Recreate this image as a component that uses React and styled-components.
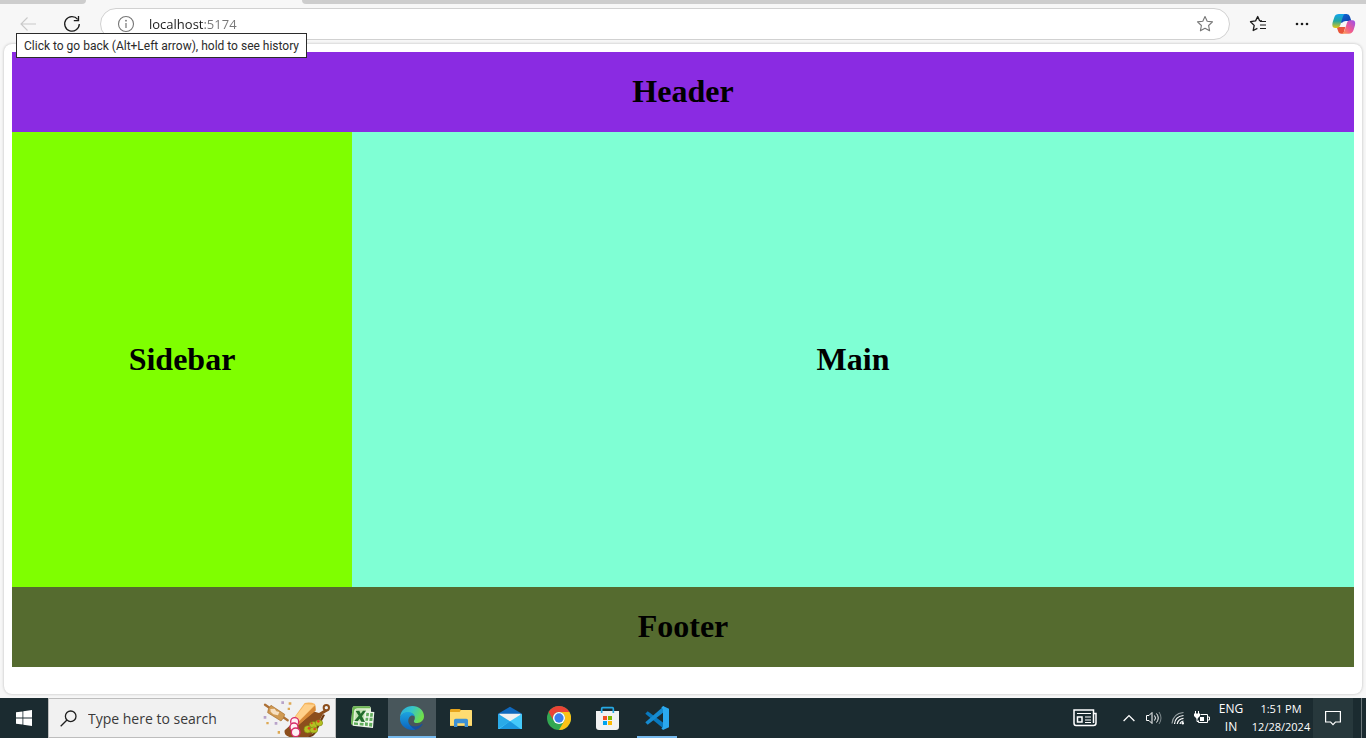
import React from "react";
import styled, { createGlobalStyle } from "styled-components";

const GlobalStyle = createGlobalStyle`
  * { box-sizing: border-box; }
  body { margin: 0; background: #f7f7f7; }
  button, input { font-family: inherit; }
`;

const Screen = styled.div`
  display: flex;
  flex-direction: column;
  min-height: 100vh;
  font-family: "Open Sans", "Noto Sans", sans-serif;
`;

const TabStrip = styled.div`
  display: flex;
  height: 4px;
  background: #f7f7f7;
`;

const Tab = styled.div`
  flex: ${(p) => (p.$grow ? "1" : "none")};
  width: ${(p) => p.$width || "auto"};
  background: ${(p) => (p.$active ? "#f7f7f7" : "#cdcdcd")};
  border-radius: ${(p) => p.$radius || "0"};
`;

const Toolbar = styled.div`
  position: relative;
  display: flex;
  align-items: center;
  gap: 12px;
  height: 40px;
  padding: 0 8px 0 12px;
`;

const ToolButton = styled.button`
  display: flex;
  flex: none;
  align-items: center;
  justify-content: center;
  width: ${(p) => (p.$narrow ? "28px" : "32px")};
  height: 32px;
  padding: 0;
  border: 0;
  background: none;
  color: ${(p) => (p.$muted ? "#c9c9c9" : "#1b1b1b")};
`;

const AddressBar = styled.div`
  display: flex;
  flex: 1;
  align-items: center;
  height: 32px;
  padding: 0 8px 0 9px;
  border: 1px solid #d1d1d1;
  border-radius: 16px;
  background: #fff;
`;

const AddressInput = styled.input`
  flex: 1;
  min-width: 0;
  height: 24px;
  padding: 0;
  margin-left: 7px;
  border: 0;
  outline: 0;
  font-size: 13px;
  color: transparent;
  background: linear-gradient(90deg, #1b1b1b 55px, #767676 55px);
  background-clip: text;
  -webkit-background-clip: text;
`;

const Tooltip = styled.div`
  position: absolute;
  top: 29px;
  left: 16px;
  z-index: 2;
  padding: 1px 7px 0;
  border: 1px solid #2b2b2b;
  background: #fff;
  color: #2b2b2b;
  font-family: Roboto, sans-serif;
  font-size: 12px;
  line-height: 22px;
  white-space: nowrap;
`;

const Viewport = styled.div`
  display: flex;
  flex: 1;
  flex-direction: column;
  margin: 0 4px 4px;
  padding: 8px 8px 27px;
  border-radius: 8px;
  background: #fff;
  box-shadow: 0 0 3px rgba(0, 0, 0, 0.25);
  font-family: "Liberation Serif", serif;
`;

const Band = styled.div`
  display: flex;
  align-items: center;
  justify-content: center;
  min-height: 80px;
  padding-bottom: 2px;
  background: ${(p) => p.$color};
`;

const Columns = styled.div`
  display: grid;
  flex: 1;
  grid-template-columns: 340px 1fr;
`;

const Title = styled.h1`
  margin: 0;
  color: #000;
  font-size: 32px;
  line-height: 36px;
`;

const Taskbar = styled.div`
  display: flex;
  height: 40px;
  background: #1b2b30;
  color: #fff;
`;

const StartButton = styled.button`
  display: flex;
  align-items: center;
  justify-content: center;
  width: 48px;
  padding: 0;
  border: 0;
  background: none;
`;

const SearchBox = styled.label`
  display: flex;
  align-items: center;
  width: 288px;
  padding: 0 4px 0 11px;
  border: 1px solid #bdbdbd;
  background: #f1f1f1;
`;

const SearchInput = styled.input`
  flex: 1;
  min-width: 0;
  height: 30px;
  padding: 0;
  margin-left: 11px;
  border: 0;
  outline: 0;
  background: none;
  font-size: 14px;
  &::placeholder { color: #3a3a3a; opacity: 1; }
`;

const ArtSlot = styled.span`
  display: flex;
  align-self: flex-end;
`;

const Apps = styled.div`
  display: flex;
  gap: 1px;
  margin-left: 3px;
`;

const AppButton = styled.button`
  display: flex;
  align-items: center;
  justify-content: center;
  width: 48px;
  padding: 0;
  border: 0;
  background: ${(p) =>
    p.$active
      ? "linear-gradient(#76b9ed, #76b9ed) bottom / 48px 2px no-repeat, #48565b"
      : p.$open
      ? "linear-gradient(#76b9ed, #76b9ed) bottom / 40px 2px no-repeat"
      : "none"};
`;

const Tray = styled.div`
  display: flex;
  align-items: stretch;
  margin-left: auto;
`;

const TrayButton = styled.button`
  display: flex;
  flex-direction: column;
  align-items: center;
  justify-content: center;
  width: ${(p) => p.$width};
  padding: 0;
  border: 0;
  background: ${(p) => (p.$tinted ? "#27383c" : "none")};
  color: #fff;
  font-size: ${(p) => p.$size || "12px"};
  line-height: 18px;
  white-space: nowrap;
`;

const ShowDesktop = styled.button`
  width: 5px;
  margin-left: 8px;
  padding: 0;
  border: 0;
  border-left: 1px solid #6c777a;
  background: none;
`;

const Svg = ({ w, h, box, children }) => (
  <svg width={w} height={h} viewBox={box || `0 0 ${w} ${h}`} fill="none" aria-hidden="true">
    {children}
  </svg>
);

const BackIcon = () => (
  <Svg w={16} h={16}>
    <path d="M7.5 1.5 1 8l6.500 6.500M1 8h15" stroke="currentColor" strokeWidth="1.100" />
  </Svg>
);

const ReloadIcon = () => (
  <Svg w={18} h={18}>
    <path d="M14.700 4.300A7.300 7.300 0 1 0 16.300 9" stroke="currentColor" strokeWidth="1.300" />
    <path d="M15.500 1v4.600h-4.700" stroke="currentColor" strokeWidth="1.300" />
  </Svg>
);

const InfoIcon = () => (
  <Svg w={18} h={18}>
    <circle cx="9" cy="9" r="7.500" stroke="#767676" strokeWidth="1.100" />
    <path d="M9 8v5" stroke="#767676" strokeWidth="1.200" />
    <circle cx="9" cy="5.700" r=".9" fill="#767676" />
  </Svg>
);

const StarIcon = () => (
  <Svg w={18} h={18}>
    <path d="m9 1.500 2.200 4.800 5.300.600-3.900 3.600 1 5.300L9 13.200l-4.600 2.600 1-5.300L1.500 6.900l5.300-.600z" stroke="#767676" strokeWidth="1.100" strokeLinejoin="round" />
  </Svg>
);

const FavoritesIcon = () => (
  <Svg w={18} h={18}>
    <path d="M13 5.900 10.600 5.700 8.700 1.500 6.600 5.900 1.500 6.700l3.700 3.700-1 5.100 4.200-2.100" stroke="currentColor" strokeWidth="1.300" strokeLinejoin="round" />
    <path d="M11 6.500h6M11 10h6M11 13.500h6" stroke="currentColor" strokeWidth="1.200" />
  </Svg>
);

const DotsIcon = () => (
  <Svg w={16} h={4}>
    <circle cx="3" cy="2" r="1.300" fill="currentColor" />
    <circle cx="8" cy="2" r="1.300" fill="currentColor" />
    <circle cx="13" cy="2" r="1.300" fill="currentColor" />
  </Svg>
);

const CopilotIcon = () => (
  <Svg w={24} h={22} box="558 39 72 66">
    <defs>
      <linearGradient id="cpA" x1="0" y1="0" x2="0" y2="1">
        <stop offset="0" stopColor="#12a5ee" />
        <stop offset=".5" stopColor="#23a6a0" />
        <stop offset="1" stopColor="#e8c813" />
      </linearGradient>
      <linearGradient id="cpB" x1="1" y1="0" x2="0" y2="1">
        <stop offset="0" stopColor="#9a50ee" />
        <stop offset=".55" stopColor="#ef5a91" />
        <stop offset="1" stopColor="#ffa04b" />
      </linearGradient>
      <linearGradient id="cpC" x1="0" y1="0" x2="1" y2="1">
        <stop offset="0" stopColor="#126fda" />
        <stop offset="1" stopColor="#0b3ca8" />
      </linearGradient>
    </defs>
    <path d="M582 42h20q8 0 10 8l4 13h-16q-8 0-12 5h-12z" fill="url(#cpC)" />
    <path d="M572 81h26l-6 20h-6q-8 0-10-9z" fill="#e8553a" />
    <path d="M579 42h17q-4 3-6 10l-7 23q-3 9-11 9h-4q-12 0-8-17l5-15q3-10 14-10z" fill="url(#cpA)" />
    <path d="M608 101h-19q5-3 7-10l6-20q3-10 11-10h6q11 0 8 15l-4 13q-4 12-15 12z" fill="url(#cpB)" />
  </Svg>
);

const WindowsIcon = () => (
  <Svg w={16} h={16}>
    <path d="M0 2.300 6.500 1.400v6.200H0zM7.300 1.300 16 0v7.600H7.300zM0 8.400h6.500v6.200L0 13.700zM7.300 8.400H16V16l-8.700-1.300z" fill="#fff" />
  </Svg>
);

const SearchIcon = () => (
  <Svg w={17} h={17}>
    <circle cx="10.700" cy="6.300" r="5.300" stroke="#1f1f1f" strokeWidth="1.300" />
    <path d="m7 10-6.300 6.300" stroke="#1f1f1f" strokeWidth="1.300" />
  </Svg>
);

const SnackArt = () => (
  <Svg w={68} h={36} box="38 36 204 108">
    <path d="m222 62-16 10-34-10-69 62q-4 14 14 20h54q12-3 17-13l30-56 14-8z" fill="#8c4e1c" />
    <path d="m171 144 17-11 30-57 6 2-29 56q-6 8-15 10z" fill="#6d3710" />
    <circle cx="228" cy="56" r="8" stroke="#8c4e1c" strokeWidth="6" />
    <path d="m124 96 39-54q17-4 31 3l2 17-54 48z" fill="#f5b45c" />
    <path d="m126 96 38-50 30 1-50 53z" fill="#ffd08a" />
    <path d="m143 100 52-51 1 16-53 44z" fill="#d78937" />
    <g stroke="#d62b67" strokeWidth="4" fill="#fff0f4">
      <circle cx="133" cy="98" r="12" />
      <circle cx="131" cy="114" r="12" />
      <circle cx="136" cy="130" r="13" />
    </g>
    <g fill="#b5bf22" stroke="#7d8c12" strokeWidth="2">
      <ellipse cx="189" cy="108" rx="12" ry="10" />
      <ellipse cx="172" cy="121" rx="11" ry="11" />
      <ellipse cx="190" cy="123" rx="12" ry="9" />
      <ellipse cx="206" cy="102" rx="11" ry="9" />
    </g>
    <g fill="#e04422">
      <circle cx="176" cy="118" r="4" /><circle cx="193" cy="120" r="4" />
      <circle cx="204" cy="97" r="4" /><circle cx="184" cy="103" r="3" />
    </g>
    <path d="m44 47 68 47" stroke="#ad7136" strokeWidth="7" strokeLinecap="round" />
    <path d="m62 49 41 27q-1 11-11 20L52 71q0-13 10-22z" fill="#d09a52" stroke="#a66c2d" strokeWidth="2" />
    <path d="m60 60 13-1 5 8 9 2-4 10-14-3-8-8z" fill="#f6dfc1" />
    <path d="M93 37h8v8h-8zM40 81h8v8h-8zM73 99h8v8h-8z" fill="#b8a3c9" />
    <path d="M115 40h8v7h-8zM112 56h7v7h-7zM48 99h7v7h-7zM82 126h7v8h-7z" fill="#dda853" />
  </Svg>
);

const ExcelIcon = () => (
  <Svg w={24} h={24} box="303 48 72 72">
    <path d="M312 49h46q5 1 5 7v50l-52-1-8-3 4-46q1-7 5-7z" fill="#dff0d3" />
    <path d="M312 49h46q3 1 3 6h-38q-9 0-11 8l-3 42-6-3 4-46q1-7 5-7z" fill="#6bb551" />
    <path d="m318 58 30 1-3 37-31-3z" fill="#c3e2b2" />
    <path d="m344 64 29 2-4 48-61-7 1-14 33 3z" fill="#eef6ea" />
    <path d="m317 63 11-1 4 9 7-9h9l-12 17 9 17-11-1-5-9-6 8-10-1 13-16z" fill="#216b2b" />
    <path d="M349 68l8 1-1 10h-8zM361 69l8 1-1 10h-8zM347 83h8l-1 9h-8zM359 83h9l-1 10h-9zM345 97l9 1-1 10-8-1zM358 98l9 1-1 11-9-1zM329 98l12 1-1 8-11-1zM312 97l12 1v7l-12-1z" fill="#62ae5d" />
  </Svg>
);

const EdgeIcon = () => (
  <Svg w={24} h={24} box="0 0 72 72">
    <defs>
      <linearGradient id="edA" x1="0" y1="0" x2="1" y2=".4">
        <stop offset="0" stopColor="#2aa8e0" />
        <stop offset=".5" stopColor="#36c5c8" />
        <stop offset="1" stopColor="#6fe04c" />
      </linearGradient>
      <linearGradient id="edB" x1="0" y1="0" x2="0" y2="1">
        <stop offset="0" stopColor="#1ca4df" />
        <stop offset="1" stopColor="#0d62bd" />
      </linearGradient>
    </defs>
    <path d="M0 34C2 12 18 0 37 0c20 0 35 14 35 31 0 12-9 20-20 20-8 0-12-3-10-7 7-10 0-24-16-24C12 19 3 25 0 34z" fill="url(#edA)" />
    <path d="M27 29c-8 10-5 26 9 31 11 3 22 0 29-6 2-1 3 0 2 2-7 11-19 17-31 16-15-5-23-18-19-31 1-6 5-10 10-12z" fill="#174f9f" />
    <path d="M0 35c3-11 13-17 25-17 9 0 17 5 19 13-5-4-12-3-16 3-8 12-1 27 18 37-24 5-48-11-46-36z" fill="url(#edB)" />
  </Svg>
);

const FolderIcon = () => (
  <Svg w={24} h={24} box="192 48 72 72">
    <path d="M195 61q0-4 4-4h24q3 0 4 3h30q4 0 4 4v43h-66z" fill="#e7a51d" />
    <path d="M195 66h29l4-6h30q3 0 3 4v43h-66z" fill="#ffdc72" />
    <path d="M207 111V91q0-5 5-5h32q5 0 5 5v20h-10v-11h-22v11z" fill="#3e91d5" />
  </Svg>
);

const MailIcon = () => (
  <Svg w={24} h={24} box="339 48 72 72">
    <path d="m375 50 36 21v10h-72V71z" fill="#0f68bd" />
    <path d="M343 71h64v15l-32 13-32-13z" fill="#f1f1f1" />
    <path d="m339 71 72 46h-72z" fill="#2aaae8" />
    <path d="m411 71-72 46h72z" fill="#45cafb" />
    <path d="m343 117 32-23 32 23z" fill="#1c98df" />
  </Svg>
);

const ChromeIcon = () => (
  <Svg w={24} h={24} box="0 0 48 48">
    <circle cx="24" cy="24" r="24" fill="#33a852" />
    <path d="M3.200 12A24 24 0 0 1 44.800 12H24a12 12 0 0 0-10.400 18z" fill="#ea4335" />
    <path d="M44.800 12A24 24 0 0 1 24 48l10.400-18A12 12 0 0 0 34.400 18 12 12 0 0 0 24 12z" fill="#fbc116" />
    <circle cx="24" cy="24" r="12" fill="#fff" />
    <circle cx="24" cy="24" r="9.300" fill="#3b7ded" />
  </Svg>
);

const StoreIcon = () => (
  <Svg w={24} h={24} box="183 48 72 72">
    <path d="M183 63h69v48q0 9-9 9h-51q-9 0-9-9z" fill="#f2f2f2" />
    <path d="M200 69V56q0-3 3-3h29q3 0 3 3v13" stroke="#26aae5" strokeWidth="5" />
    <path d="M204 78h12v12h-12z" fill="#f25022" />
    <path d="M219 78h12v12h-12z" fill="#7fba00" />
    <path d="M204 93h12v12h-12z" fill="#00a4ef" />
    <path d="M219 93h12v12h-12z" fill="#ffb900" />
  </Svg>
);

const CodeIcon = () => (
  <Svg w={24} h={24} box="330 48 72 72">
    <path d="m331 71 7-7 49 36v17z" fill="#0879bf" />
    <path d="m331 97 7 7 49-38V48z" fill="#168bd0" />
    <path d="m384 48 18 8v56l-18 8-5-5 5-4V57l-5-4z" fill="#2ba9ef" />
  </Svg>
);

const NewsIcon = () => (
  <Svg w={24} h={18}>
    <path d="M20.500 4.500H23v9.500q0 2.500-2.500 2.500H3Q1 16.500 1 14V1h19.500v13" stroke="#fff" strokeWidth="1.500" />
    <path d="M4 4.500h14M12 8h6M12 11h6M12 13.500h6" stroke="#fff" strokeWidth="1.200" />
    <path d="M4.500 8H9v5H4.500z" stroke="#fff" strokeWidth="1.500" />
  </Svg>
);

const ChevronIcon = () => (
  <Svg w={12} h={8}>
    <path d="m.600 7 5.400-5.400L11.400 7" stroke="#fff" strokeWidth="1.300" />
  </Svg>
);

const SpeakerIcon = () => (
  <Svg w={18} h={16}>
    <path d="M1.500 5.500H4L7 2.500v11l-3-3H1.500z" stroke="#fff" />
    <path d="M9.500 5.500q2 2.500 0 5M11.500 3.500q3.500 4.500 0 9" stroke="#fff" />
    <path d="M14 2q4 6 0 12" stroke="#7e898c" />
  </Svg>
);

const WifiIcon = () => (
  <Svg w={14} h={14}>
    <path d="M1 12.500Q2 2.500 12.500 1.500" stroke="#9aa3a5" strokeWidth="1.200" />
    <path d="M3.500 13Q4 5.500 12.500 4.500M6.200 13Q7 8 12.500 7.300M9 13q.500-2.500 3.500-3" stroke="#fff" strokeWidth="1.200" />
    <circle cx="11.800" cy="12.200" r="1.200" fill="#fff" />
  </Svg>
);

const BatteryIcon = () => (
  <Svg w={16} h={14}>
    <path d="M6.500 3.500h7v8h-9v-2M14 6h1.500v3H14" stroke="#fff" />
    <path d="M6 6h4v4H6z" fill="#fff" />
    <path d="M1.500 0v3M4.500 0v3M3 7v3.500h2" stroke="#fff" />
    <path d="M0 2.500h6V5L3 8 0 5z" fill="#fff" />
  </Svg>
);

const NoticeIcon = () => (
  <Svg w={16} h={16}>
    <path d="M.600 1.500h14.800v10.500h-5L8 14.700 5.600 12h-5z" stroke="#fff" strokeWidth="1.200" />
  </Svg>
);

const apps = [
  { name: "Excel", Icon: ExcelIcon },
  { name: "Edge", Icon: EdgeIcon, active: true },
  { name: "File Explorer", Icon: FolderIcon },
  { name: "Mail", Icon: MailIcon },
  { name: "Chrome", Icon: ChromeIcon },
  { name: "Store", Icon: StoreIcon },
  { name: "Visual Studio Code", Icon: CodeIcon, open: true },
];

export default function App() {
  return (
    <Screen>
      <GlobalStyle />
      <TabStrip>
        <Tab $width="86px" $radius="0 0 4px 0" />
        <Tab $width="216px" $active />
        <Tab $grow $radius="0 0 0 4px" />
      </TabStrip>
      <Toolbar>
        <ToolButton $muted aria-label="Back"><BackIcon /></ToolButton>
        <ToolButton aria-label="Refresh"><ReloadIcon /></ToolButton>
        <AddressBar>
          <ToolButton aria-label="Site information"><InfoIcon /></ToolButton>
          <AddressInput aria-label="Address" defaultValue="localhost:5174" spellCheck={false} />
          <ToolButton aria-label="Add to favorites"><StarIcon /></ToolButton>
        </AddressBar>
        <ToolButton aria-label="Favorites"><FavoritesIcon /></ToolButton>
        <ToolButton aria-label="Settings and more"><DotsIcon /></ToolButton>
        <ToolButton $narrow aria-label="Copilot"><CopilotIcon /></ToolButton>
        <Tooltip role="tooltip">Click to go back (Alt+Left arrow), hold to see history</Tooltip>
      </Toolbar>
      <Viewport>
        <Band as="header" $color="blueviolet"><Title>Header</Title></Band>
        <Columns>
          <Band as="aside" $color="chartreuse"><Title>Sidebar</Title></Band>
          <Band as="main" $color="aquamarine"><Title>Main</Title></Band>
        </Columns>
        <Band as="footer" $color="darkolivegreen"><Title>Footer</Title></Band>
      </Viewport>
      <Taskbar>
        <StartButton aria-label="Start"><WindowsIcon /></StartButton>
        <SearchBox>
          <SearchIcon />
          <SearchInput aria-label="Search" placeholder="Type here to search" />
          <ArtSlot><SnackArt /></ArtSlot>
        </SearchBox>
        <Apps>
          {apps.map(({ name, Icon, active, open }) => (
            <AppButton key={name} aria-label={name} $active={active} $open={open}>
              <Icon />
            </AppButton>
          ))}
        </Apps>
        <Tray>
          <TrayButton $width="60px" aria-label="News"><NewsIcon /></TrayButton>
          <TrayButton $width="28px" aria-label="Show hidden icons"><ChevronIcon /></TrayButton>
          <TrayButton $width="22px" aria-label="Volume"><SpeakerIcon /></TrayButton>
          <TrayButton $width="26px" aria-label="Network"><WifiIcon /></TrayButton>
          <TrayButton $width="22px" aria-label="Battery"><BatteryIcon /></TrayButton>
          <TrayButton $width="36px"><span>ENG</span><span>IN</span></TrayButton>
          <TrayButton $width="64px" $size="11px"><span>1:51 PM</span><span>12/28/2024</span></TrayButton>
          <TrayButton $width="40px" $tinted aria-label="Notifications"><NoticeIcon /></TrayButton>
          <ShowDesktop aria-label="Show desktop" />
        </Tray>
      </Taskbar>
    </Screen>
  );
}
